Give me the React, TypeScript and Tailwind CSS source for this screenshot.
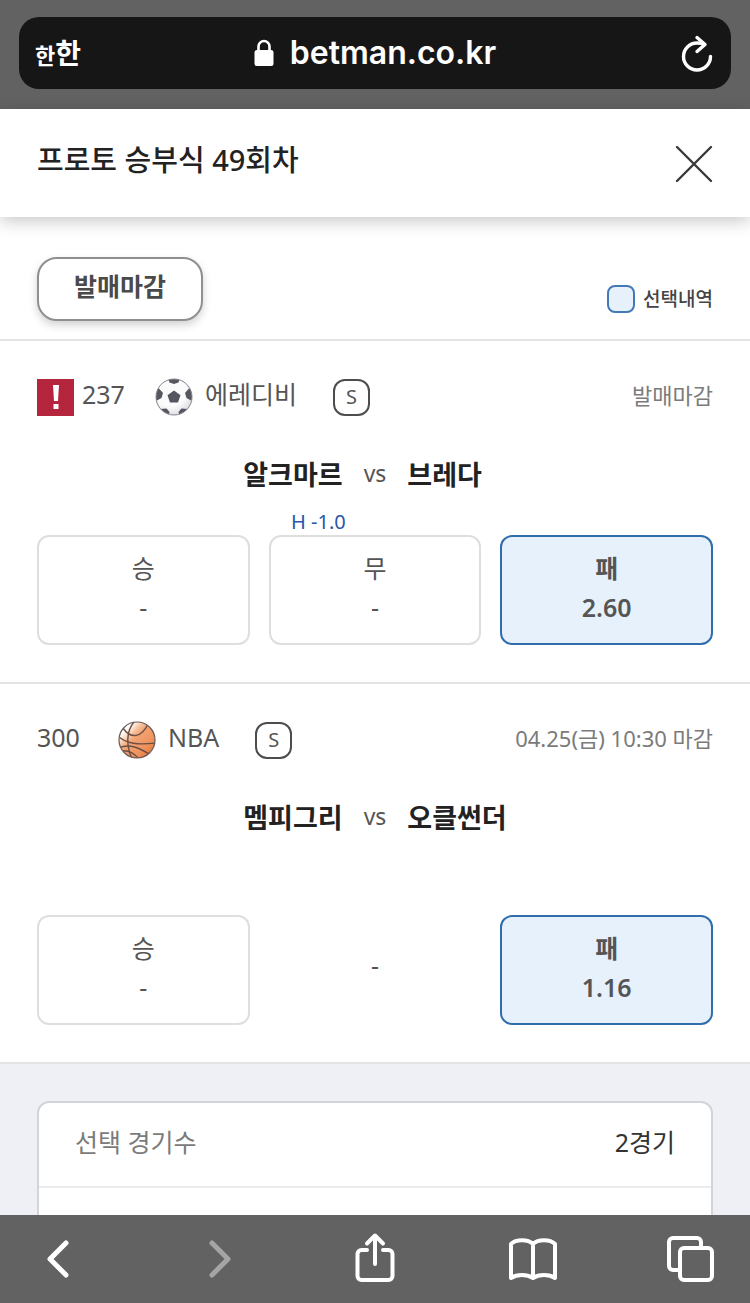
import React from "react";

type Option = { label: string; odds: string; selected?: boolean; open?: boolean };

type Match = {
    no: string;
    alert?: boolean;
    sport: "soccer" | "basketball";
    league: string;
    status: string;
    home: string;
    away: string;
    handicap?: string;
    options: Option[];
};

const matches: Match[] = [
    {
        no: "237",
        alert: true,
        sport: "soccer",
        league: "에레디비",
        status: "발매마감",
        home: "알크마르",
        away: "브레다",
        handicap: "H -1.0",
        options: [
            { label: "승", odds: "-" },
            { label: "무", odds: "-" },
            { label: "패", odds: "2.60", selected: true },
        ],
    },
    {
        no: "300",
        sport: "basketball",
        league: "NBA",
        status: "04.25(금) 10:30 마감",
        home: "멤피그리",
        away: "오클썬더",
        options: [
            { label: "승", odds: "-" },
            { label: "", odds: "-", open: true },
            { label: "패", odds: "1.16", selected: true },
        ],
    },
];

const SoccerBall = () => (
    <svg className="size-[38px] shrink-0" viewBox="0 0 38 38" aria-hidden="true">
        <defs>
            <clipPath id="soccer-clip">
                <circle cx="19" cy="19" r="18" />
            </clipPath>
            <radialGradient id="soccer-fill" cx="0.4" cy="0.35" r="0.7">
                <stop offset="0.6" stopColor="#fbfbfc" />
                <stop offset="1" stopColor="#dcdce2" />
            </radialGradient>
        </defs>
        <circle cx="19" cy="19" r="18" fill="url(#soccer-fill)" />
        <g clipPath="url(#soccer-clip)" fill="#55565f">
            <path d="M19 12.500l6.500 4.800-2.500 7.200h-8l-2.500-7.200z" />
            <path d="M13 0h12l-1.500 4.500-4.500 1.500-4.500-1.500z" />
            <path d="M0 12l4-1.500 4 4.500-1.500 5-4.500 2.500-2-1z" />
            <path d="M38 12l-4-1.500-4 4.500 1.500 5 4.500 2.500 2-1z" />
            <path d="M5 31l6.500-.500 3 3.500-1 4-7-2z" />
            <path d="M33 31l-6.500-.500-3 3.500 1 4 7-2z" />
        </g>
        <circle cx="19" cy="19" r="18" fill="none" stroke="#85868d" strokeWidth="1" />
    </svg>
);

const Basketball = () => (
    <svg className="size-[38px] shrink-0" viewBox="0 0 38 38" aria-hidden="true">
        <defs>
            <clipPath id="basket-clip">
                <circle cx="19" cy="19" r="18" />
            </clipPath>
            <linearGradient id="basket-fill" x1="0" y1="0" x2="1" y2="1">
                <stop offset="0.200" stopColor="#ffffff" />
                <stop offset="0.360" stopColor="#f6bd96" />
                <stop offset="0.450" stopColor="#f2a271" />
                <stop offset="0.700" stopColor="#f0945f" />
                <stop offset="1" stopColor="#dd6527" />
            </linearGradient>
        </defs>
        <circle cx="19" cy="19" r="18" fill="url(#basket-fill)" />
        <g clipPath="url(#basket-clip)" fill="none" stroke="#6b4f45" strokeWidth="1.400">
            <path d="M0 15c8 8 20 9 38 7" />
            <path d="M17 0C8 9 8 24 14 38" />
            <path d="M5 7c8 12 19 9 25-4" />
            <path d="M0 27c12-5 21 0 33 7" />
            <path d="M3 30c7-1 13 2 18 8" />
        </g>
        <circle cx="19" cy="19" r="18" fill="none" stroke="#6b5a55" strokeWidth="1.200" />
    </svg>
);

const OptionBox = ({ option }: { option: Option }) => {
    if (option.open) {
        return <div className="flex h-[110px] items-center justify-center pb-2 text-[#555]">{option.odds}</div>;
    }
    return (
        <button
            type="button"
            className={
                option.selected
                    ? "flex h-[110px] flex-col items-center rounded-xl border-2 border-[#2f6dad] bg-[#e6f1fb] pt-3 font-semibold leading-[39px] text-[#555]"
                    : "flex h-[110px] flex-col items-center rounded-xl border-2 border-[#dedede] bg-white pt-3 leading-[39px] text-[#555]"
            }
        >
            <span>{option.label}</span>
            <span>{option.odds}</span>
        </button>
    );
};

const MatchCard = ({ match }: { match: Match }) => (
    <article className="border-b-2 border-[#e4e4e4] px-[37px] pt-9 pb-[37px]">
        <div className="flex h-10 items-center text-[#555]">
            {match.alert && (
                <span className="mr-2 flex size-[37px] items-center justify-center bg-[#b5253e]">
                    <svg className="h-6 w-2" viewBox="0 0 8 24" fill="#fff" aria-hidden="true">
                        <path d="M1 0h6l-1 16H2z" />
                        <path d="M1.500 19h5v5h-5z" />
                    </svg>
                </span>
            )}
            <span className="pb-1">{match.no}</span>
            <span className={match.alert ? "ml-[30px] mr-3 flex" : "ml-[38px] mr-3 flex"}>
                {match.sport === "soccer" ? <SoccerBall /> : <Basketball />}
            </span>
            <span className="pb-1">{match.league}</span>
            <span className="ml-9 flex size-[37px] items-center justify-center rounded-xl border-2 border-[#4d4d4d] text-[20px] leading-none">
                S
            </span>
            <span className="ml-auto pb-1 text-[22px] text-[#7b7b7b]">{match.status}</span>
        </div>
        <div className="mt-[34px] grid h-12 grid-cols-[1fr_auto_1fr] items-center gap-[21px] text-[27px] font-bold text-[#222]">
            <span className="text-right">{match.home}</span>
            <span className="pb-1 text-[23px] font-normal text-[#555]">vs</span>
            <span>{match.away}</span>
        </div>
        {match.handicap ? (
            <div className="flex h-9 items-end pl-[254px] text-[20px] leading-[26px] whitespace-nowrap text-[#2858a8]">{match.handicap}</div>
        ) : (
            <div className="h-[73px]" />
        )}
        <div className="grid grid-cols-3 gap-[19px]">
            {match.options.map((option, i) => (
                <OptionBox key={i} option={option} />
            ))}
        </div>
    </article>
);

const BrowserBar = () => (
    <div className="shrink-0 bg-[#626262] px-[19px] pt-[17px] pb-5">
        <div className="grid h-[72px] grid-cols-[1fr_auto_1fr] items-center rounded-[20px] bg-[#161616] px-4 text-white">
            <button type="button" className="flex items-baseline justify-self-start font-bold">
                <span className="text-[22px]">한</span>
                <span className="text-[28px]">한</span>
            </button>
            <div className="flex items-center gap-4">
                <svg className="h-7 w-5" viewBox="0 0 20 28" aria-hidden="true">
                    <rect x="0.500" y="11" width="19" height="16" rx="2.500" fill="#fff" />
                    <path d="M4.500 12V7.500a5.500 5.500 0 0 1 11 0V12" fill="none" stroke="#fff" strokeWidth="2.600" />
                </svg>
                <span className="font-['Inter',sans-serif] text-[32px] font-semibold">betman.co.kr</span>
            </div>
            <button type="button" className="justify-self-end" aria-label="새로고침">
                <svg className="h-10 w-9" viewBox="0 0 36 40" fill="none" stroke="#fff" strokeWidth="3.400" strokeLinecap="round" strokeLinejoin="round">
                    <path d="M31.500 23.500a13.500 13.500 0 1 1-13.500-13.500c3 0 5 .300 7.500 1.300" />
                    <path d="M18 4.500l8 7-8 7" />
                </svg>
            </button>
        </div>
    </div>
);

const Toolbar = () => (
    <nav className="flex h-[88px] shrink-0 items-center justify-between bg-[#626262] px-[35px] text-white">
        <button type="button" aria-label="뒤로" className="flex w-[50px] justify-center">
            <svg className="size-11" viewBox="0 0 44 44" fill="none" stroke="currentColor" strokeWidth="5" strokeLinecap="round" strokeLinejoin="round">
                <path d="M28 6L12 22l16 16" />
            </svg>
        </button>
        <button type="button" aria-label="앞으로" className="flex w-[50px] justify-center text-[#a5a5a5]">
            <svg className="size-11" viewBox="0 0 44 44" fill="none" stroke="currentColor" strokeWidth="5" strokeLinecap="round" strokeLinejoin="round">
                <path d="M16 6l16 16-16 16" />
            </svg>
        </button>
        <button type="button" aria-label="공유" className="flex w-[50px] justify-center">
            <svg className="h-[54px] w-11" viewBox="0 0 44 54" fill="none" stroke="currentColor" strokeWidth="4" strokeLinecap="round" strokeLinejoin="round">
                <path d="M14 18H8.500a4 4 0 0 0-4 4v22a4 4 0 0 0 4 4h27a4 4 0 0 0 4-4V22a4 4 0 0 0-4-4H30" />
                <path d="M22 32V4M14 11.500l8-8 8 8" />
            </svg>
        </button>
        <button type="button" aria-label="책갈피" className="flex w-[50px] justify-center">
            <svg className="h-11 w-[50px]" viewBox="0 0 50 44" fill="none" stroke="currentColor" strokeWidth="4" strokeLinejoin="round">
                <path d="M25 7C20 2 8 2 3 7v34c6-4 16-4 22 0 6-4 16-4 22 0V7C42 2 30 2 25 7zM25 7v34" />
            </svg>
        </button>
        <button type="button" aria-label="탭" className="flex w-[50px] justify-center">
            <svg className="size-12" viewBox="0 0 48 48" fill="none" stroke="currentColor" strokeWidth="4" strokeLinejoin="round">
                <rect x="14" y="13" width="32" height="32" rx="4" />
                <path d="M14 35H7a4 4 0 0 1-4-4V7a4 4 0 0 1 4-4h24a4 4 0 0 1 4 4v6" />
            </svg>
        </button>
    </nav>
);

const App = () => {
    return (
        <div className="flex h-screen flex-col overflow-hidden bg-white font-['Noto_Sans','Noto_Sans_CJK_KR',sans-serif] text-[25px]">
            <BrowserBar />
            <header className="z-10 flex h-[108px] shrink-0 items-center justify-between bg-white px-[37px] pt-0.5 shadow-[0_4px_16px_rgba(0,0,0,0.22)]">
                <h1 className="pb-2 text-[29px] font-medium text-[#222]">프로토 승부식 49회차</h1>
                <button type="button" aria-label="닫기">
                    <svg className="size-[38px]" viewBox="0 0 38 38" stroke="#3a3a3a" strokeWidth="2.400" strokeLinecap="round">
                        <path d="M2 2l34 34M36 2L2 36" />
                    </svg>
                </button>
            </header>
            <main className="min-h-0 flex-1 overflow-hidden">
                <div className="flex items-end justify-between border-b-2 border-[#e4e4e4] px-[37px] pt-10 pb-[18px]">
                    <button
                        type="button"
                        className="h-16 rounded-[20px] border-2 border-[#8f8f8f] bg-white px-[35px] pb-1 font-semibold text-[#4a4a4a] shadow-[0_4px_8px_rgba(0,0,0,0.18)]"
                    >
                        발매마감
                    </button>
                    <label className="flex items-center gap-2 pb-2 text-[19px] leading-7 font-medium text-[#444]">
                        <input type="checkbox" className="size-7 appearance-none rounded-lg border-2 border-[#4479b5] bg-[#e6f1fb]" />
                        선택내역
                    </label>
                </div>
                {matches.map((match) => (
                    <MatchCard key={match.no} match={match} />
                ))}
                <section className="bg-[#eff0f6] px-[37px] pt-[37px]">
                    <dl className="rounded-t-xl border-2 border-[#d3d3db] bg-white">
                        <div className="flex h-[85px] items-center justify-between border-b-2 border-[#ececec] px-9 pb-1">
                            <dt className="text-[#7b7b7b]">선택 경기수</dt>
                            <dd className="text-[#333]">2경기</dd>
                        </div>
                        <div className="h-20" />
                    </dl>
                </section>
            </main>
            <Toolbar />
        </div>
    );
};

export default App;
